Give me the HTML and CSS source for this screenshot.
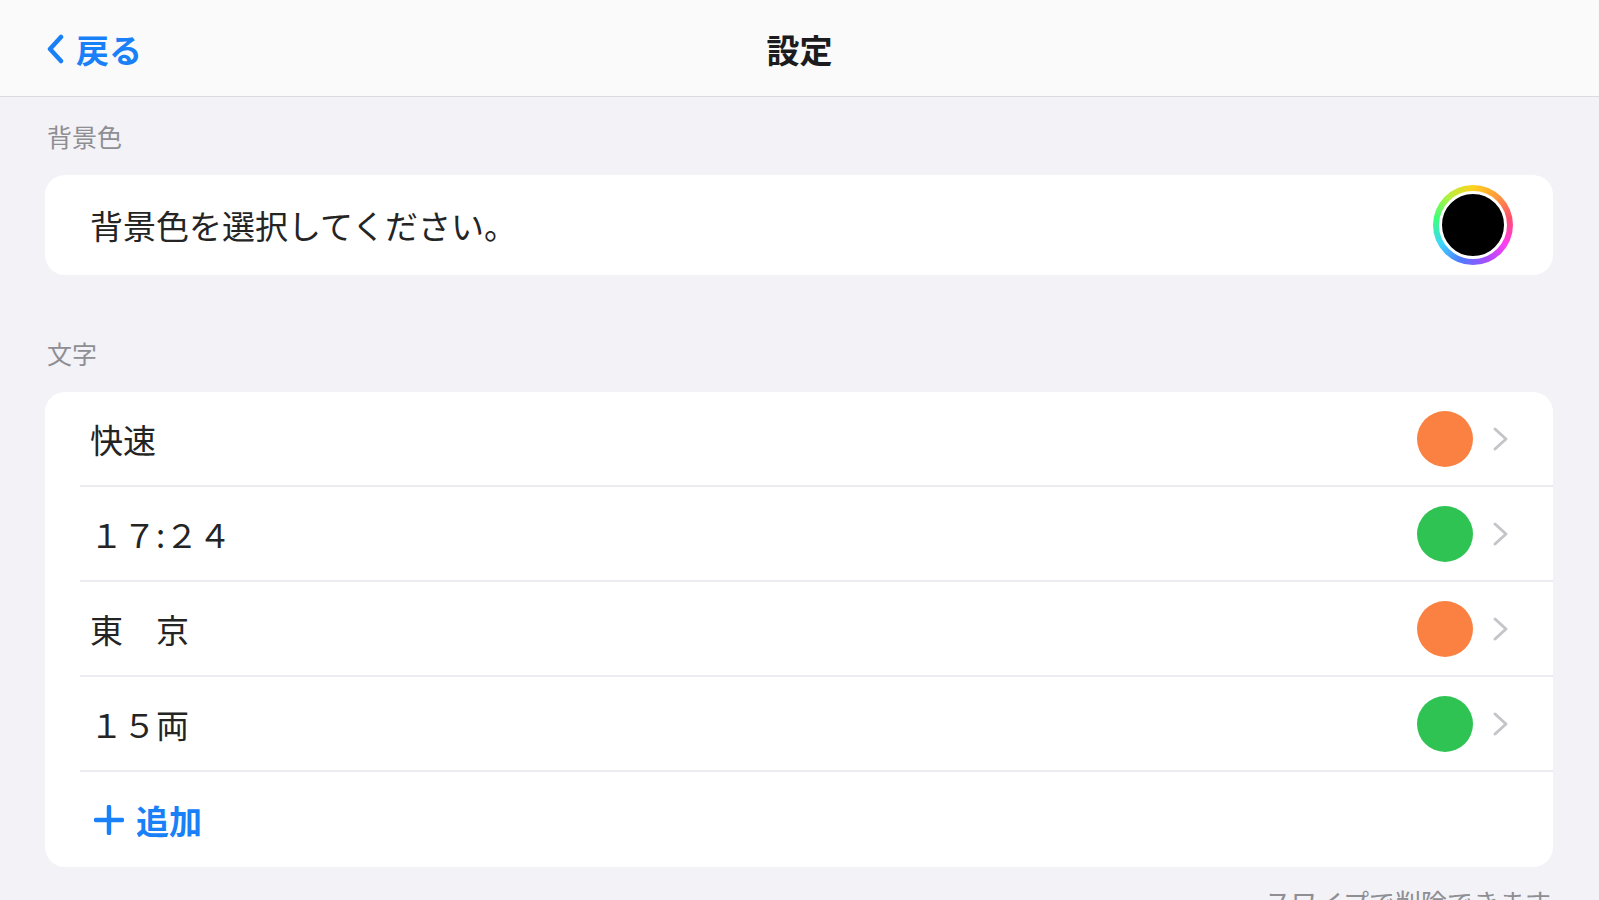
FILE: index.html
```html
<!DOCTYPE html>
<html lang="ja">
<head>
    <meta charset="UTF-8">
    <meta name="viewport" content="width=device-width, initial-scale=1.0">
    <title>設定</title>
    <link rel="stylesheet" href="styles.css">
</head>
<body>
    <header class="navbar">
        <a class="back" href="#">
            <svg class="back-icon" viewBox="0 0 18 30" width="18" height="30">
                <polyline points="15,3 4,15 15,27" fill="none" stroke="currentColor" stroke-width="4.5" stroke-linecap="round" stroke-linejoin="round"/>
            </svg>
            <span>戻る</span>
        </a>
        <h1 class="nav-title">設定</h1>
    </header>

    <main class="content">
        <h2 class="section-title">背景色</h2>
        <div class="card">
            <div class="row row-single">
                <span class="row-label">背景色を選択してください。</span>
                <div class="color-well"><div class="color-well-inner"></div></div>
            </div>
        </div>

        <h2 class="section-title">文字</h2>
        <div class="card">
            <div class="row">
                <span class="row-label">快速</span>
                <span class="dot orange"></span>
                <svg class="chevron" viewBox="0 0 18 26" width="18" height="26"><polyline points="3,3 14,13 3,23" fill="none" stroke="currentColor" stroke-width="3" stroke-linecap="round" stroke-linejoin="round"/></svg>
            </div>
            <div class="row">
                <span class="row-label">１７:２４</span>
                <span class="dot green"></span>
                <svg class="chevron" viewBox="0 0 18 26" width="18" height="26"><polyline points="3,3 14,13 3,23" fill="none" stroke="currentColor" stroke-width="3" stroke-linecap="round" stroke-linejoin="round"/></svg>
            </div>
            <div class="row">
                <span class="row-label">東　京</span>
                <span class="dot orange"></span>
                <svg class="chevron" viewBox="0 0 18 26" width="18" height="26"><polyline points="3,3 14,13 3,23" fill="none" stroke="currentColor" stroke-width="3" stroke-linecap="round" stroke-linejoin="round"/></svg>
            </div>
            <div class="row">
                <span class="row-label">１５両</span>
                <span class="dot green"></span>
                <svg class="chevron" viewBox="0 0 18 26" width="18" height="26"><polyline points="3,3 14,13 3,23" fill="none" stroke="currentColor" stroke-width="3" stroke-linecap="round" stroke-linejoin="round"/></svg>
            </div>
            <div class="row add-row">
                <svg class="plus" viewBox="0 0 30 30" width="30" height="30">
                    <path d="M15 2 V28 M2 15 H28" fill="none" stroke="currentColor" stroke-width="4.5" stroke-linecap="round"/>
                </svg>
                <span class="add-label">追加</span>
            </div>
        </div>

        <p class="footer-note">スワイプで削除できます</p>
    </main>
</body>
</html>
```

FILE: styles.css
```css
* {
    margin: 0;
    padding: 0;
    box-sizing: border-box;
}

html, body {
    overflow: hidden;
}

body {
    background-color: #f2f2f7;
    color: #242424;
    font-family: "Noto Sans CJK JP", "Noto Sans", sans-serif;
}

.navbar {
    position: relative;
    height: 97px;
    background-color: #fafafa;
    border-bottom: 1px solid #dcdce0;
    display: flex;
    align-items: center;
    justify-content: center;
}

.back {
    position: absolute;
    left: 46px;
    top: 32px;
    display: flex;
    align-items: center;
    gap: 12px;
    color: #1a80f8;
    text-decoration: none;
    font-size: 33px;
    line-height: 34px;
    font-weight: 700;
}

.back-icon {
    display: block;
}

.nav-title {
    font-size: 33px;
    font-weight: 700;
    line-height: 34px;
    color: #1c1c1e;
    margin-top: 2px;
}

.content {
    padding: 24px 46px 0 45px;
}

.section-title {
    font-size: 25px;
    line-height: 30px;
    font-weight: 400;
    color: #8e8e93;
    padding-left: 2px;
    margin-bottom: 24px;
}

.card + .section-title {
    margin-top: 63px;
}

.card {
    background-color: #fff;
    border-radius: 20px;
    overflow: hidden;
}

.row {
    height: 95px;
    margin-left: 35px;
    padding-left: 10px;
    padding-right: 43px;
    display: flex;
    align-items: center;
    border-bottom: 2px solid #ececf0;
}

.row:last-child {
    border-bottom: none;
}

.row-single {
    height: 100px;
    padding-right: 40px;
}

.row-label {
    flex: 1;
    font-size: 33px;
    line-height: 40px;
}

.color-well {
    width: 80px;
    height: 80px;
    border-radius: 50%;
    padding: 6px;
    background: conic-gradient(#ffd21e, #ff9a3c, #ff4d6d, #ff3df0, #a44dff, #4d7cff, #3dd6ff, #3dff7a, #b6f03d, #ffd21e);
}

.color-well-inner {
    width: 100%;
    height: 100%;
    border-radius: 50%;
    background-color: #000;
    border: 3px solid #fff;
}

.dot {
    width: 56px;
    height: 56px;
    border-radius: 50%;
    margin-right: 19px;
}

.orange {
    background-color: #fb8142;
}

.green {
    background-color: #2fc353;
}

.chevron {
    color: #c4c4c9;
    display: block;
}

.add-row {
    color: #1a80f8;
    gap: 12px;
    padding-left: 14px;
}

.add-label {
    font-size: 33px;
    font-weight: 700;
    line-height: 40px;
}

.footer-note {
    margin-top: 20px;
    text-align: right;
    font-size: 26px;
    line-height: 30px;
    color: #8e8e93;
    padding-right: 2px;
}
```
